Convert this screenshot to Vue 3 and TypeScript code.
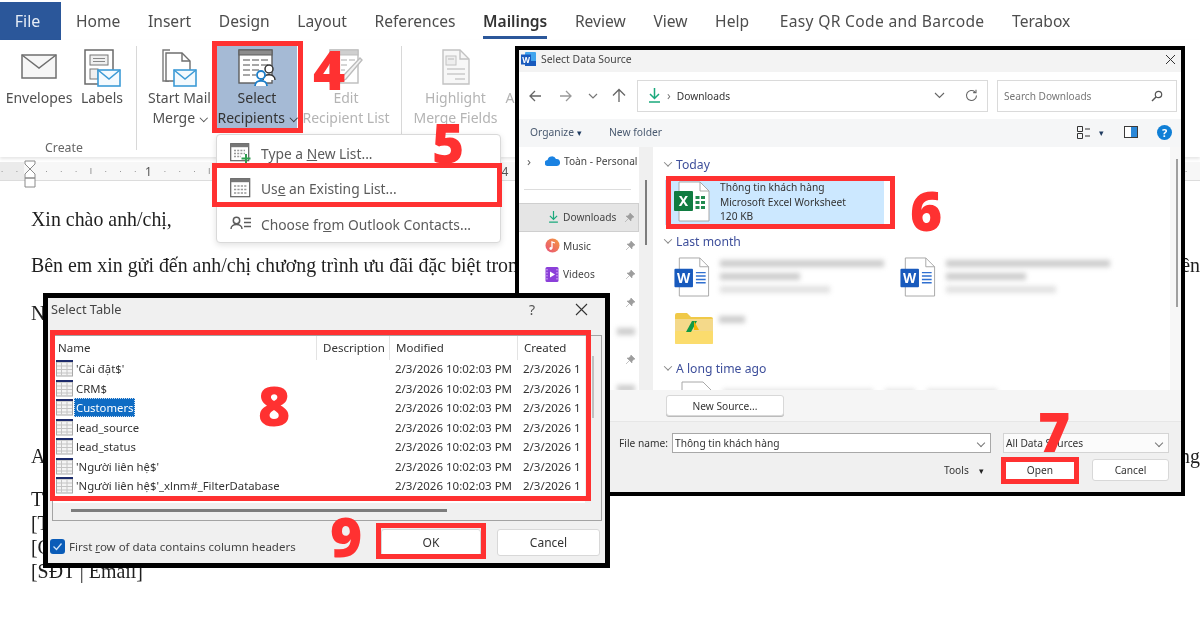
<script setup lang="ts">
const tabs: string[] = ['Home', 'Insert', 'Design', 'Layout', 'References', 'Mailings', 'Review', 'View', 'Help', 'Easy QR Code and Barcode', 'Terabox']
const tableRows: string[] = ["'Cài đặt$'", 'CRM$', 'Customers', 'lead_source', 'lead_status', "'Người liên hệ$'", "'Người liên hệ$'_xlnm#_FilterDatabase"]
const rulerDots: number[] = Array.from({ length: 84 }, (_, i) => i)
function dotX(i: number): number { return 1.6 + i * 14.8 }
const rulerNums: { n: number; x: number }[] = [{ n: 1, x: 148.4 }, { n: 2, x: 266.8 }, { n: 3, x: 385.2 }, { n: 4, x: 505 }]
</script>

<template>
  <div class="page">
    <!-- Word chrome -->
    <nav class="tabs">
      <div class="file">File</div>
      <span v-for="t in tabs" :key="t" class="tab" :class="{ on: t === 'Mailings', wide: t.startsWith('Easy') }">{{ t }}</span>
    </nav>

    <section class="ribbon">
      <div class="group g1">
        <div class="btns">
          <div class="rb w78">
            <div class="ic">
              <svg width="36" height="25" viewBox="0 0 36 25"><rect x="1" y="1" width="34" height="23" fill="#f6f6f6" stroke="#6f6f6f" stroke-width="1.5"/><path d="M1 1l17 13L35 1" fill="none" stroke="#6f6f6f" stroke-width="1.5"/></svg>
            </div>
            <span>Envelopes</span>
          </div>
          <div class="rb w48">
            <div class="ic">
              <svg width="37" height="38" viewBox="0 0 37 38"><rect x="1" y="1" width="28" height="34" fill="#fff" stroke="#6a6a6a" stroke-width="1.5"/><rect x="6" y="6" width="18" height="10" fill="#efefef" stroke="#777"/><path d="M9 9.5h12M9 12.500h12" stroke="#888"/><rect x="6" y="20" width="8" height="10" fill="#efefef" stroke="#777"/><rect x="14" y="21" width="22" height="16" fill="#f4fafe" stroke="#3d9bd6" stroke-width="1.600"/><path d="M14 21l11 9 11-9" fill="none" stroke="#3d9bd6" stroke-width="1.600"/></svg>
            </div>
            <span>Labels</span>
          </div>
        </div>
        <div class="glabel">Create</div>
      </div>

      <div class="group g2">
        <div class="btns">
          <div class="rb w76">
            <div class="ic">
              <svg width="36" height="38" viewBox="0 0 36 38"><path d="M8 1H1v31h6" fill="none" stroke="#7a7a7a" stroke-width="1.400"/><path d="M4 4h16l8 8v20H4z" fill="#fff" stroke="#6f6f6f" stroke-width="1.400"/><path d="M20 4v8h8" fill="none" stroke="#6f6f6f" stroke-width="1.400"/><rect x="12" y="21" width="22" height="16" fill="#f4fafe" stroke="#3d9bd6" stroke-width="1.600"/><path d="M12 21l11 9 11-9" fill="none" stroke="#3d9bd6" stroke-width="1.600"/></svg>
            </div>
            <span>Start Mail</span>
            <span>Merge<i class="chev"></i></span>
          </div>
          <div class="rb w80 active">
            <div class="ic">
              <svg width="38" height="38" viewBox="0 0 38 38"><rect x="1" y="1" width="33" height="33" fill="#fff" stroke="#5d5d5d" stroke-width="1.400"/><rect x="1" y="1" width="33" height="5" fill="#8d8d8d" stroke="#5d5d5d"/><path d="M5 11h7M14 11h7M23 11h7M5 16h7M14 16h7M23 16h7M5 21h7M14 21h7M5 26h7M14 26h4" stroke="#8a8a8a" stroke-width="1.400"/><circle cx="31" cy="20" r="4" fill="#fff" stroke="#333" stroke-width="1.500"/><path d="M25 31c0-7 12-7 12 0" fill="#fff" stroke="#333" stroke-width="1.500"/><circle cx="23" cy="26" r="4" fill="#fff" stroke="#1e7fc9" stroke-width="1.800"/><path d="M17 37c0-7 12-7 12 0" fill="#fff" stroke="#1e7fc9" stroke-width="1.800"/></svg>
            </div>
            <span>Select</span>
            <span>Recipients<i class="chev"></i></span>
          </div>
          <div class="rb w98 off">
            <div class="ic">
              <svg width="34" height="36" viewBox="0 0 34 36"><rect x="1" y="1" width="28" height="33" fill="#fff" stroke="#bdbdbd" stroke-width="1.400"/><rect x="1" y="1" width="28" height="5" fill="#cfcfcf" stroke="#bdbdbd"/><path d="M4 11h6M12 11h6M20 11h6M4 16h6M12 16h6M4 21h6M12 21h4" stroke="#c8c8c8" stroke-width="1.400"/><path d="M31 9l2 2-16 19-5 3 2-6z" fill="#f2f2f2" stroke="#bcbcbc" stroke-width="1.400"/></svg>
            </div>
            <span>Edit</span>
            <span>Recipient List</span>
          </div>
        </div>
      </div>

      <div class="group g3">
        <div class="btns">
          <div class="rb w93 off">
            <div class="ic">
              <svg width="28" height="36" viewBox="0 0 28 36"><path d="M1 1h17l9 9v25H1z" fill="#f7f7f7" stroke="#c2c2c2" stroke-width="1.400"/><path d="M18 1v9h9" fill="none" stroke="#c2c2c2" stroke-width="1.400"/><rect x="4" y="7" width="10" height="9" fill="#eee" stroke="#c2c2c2"/><path d="M6 10h6M5 20h18M5 25h18M13 30h10" stroke="#cacaca" stroke-width="1.400"/></svg>
            </div>
            <span>Highlight</span>
            <span>Merge Fields</span>
          </div>
          <div class="rb w60 off">
            <div class="ic"></div>
            <span>Address</span>
            <span>Block</span>
          </div>
        </div>
      </div>
    </section>

    <div class="ruler">
      <svg width="1200" height="20" viewBox="0 0 1200 20">
        <template v-for="i in rulerDots" :key="i">
          <rect v-if="i % 8 !== 2 && i !== 82" :x="dotX(i)" :y="i % 4 === 2 ? 6 : 9" width="1" :height="i % 4 === 2 ? 6 : 1" fill="#9a9a9a" />
        </template>
        <text v-for="r in rulerNums" :key="r.n" :x="r.x" y="14" class="rnum" text-anchor="middle">{{ r.n }}</text>
      </svg>
      <svg class="marker" width="12" height="28" viewBox="0 0 12 28"><path d="M1 1h10v3l-5 5-5-5zM6 9l5 5v4H1v-4zM1 18h10v9H1z" fill="#fff" stroke="#8a8a8a"/></svg>
    </div>

    <article class="doc">
      <p>Xin chào anh/chị,</p>
      <p class="between m22"><span>Bên em xin gửi đến anh/chị chương trình ưu đãi đặc biệt trong</span><span>ên</span></p>
      <p class="m24">N</p>
      <p class="between m119"><span>A</span><span>ng</span></p>
      <p class="m19">T</p>
      <p>[T</p>
      <p>[C</p>
      <p>[SĐT | Email]</p>
    </article>

    <!-- Dropdown menu -->
    <div class="menu">
      <div class="mi">
        <svg width="22" height="21" viewBox="0 0 22 21"><rect x=".7" y=".7" width="18" height="17" fill="#fff" stroke="#5f5f5f" stroke-width="1.200"/><rect x=".7" y=".7" width="18" height="3.500" fill="#777"/><path d="M4 7.500h11M4 10.500h11M4 13.500h7" stroke="#999" stroke-width="1.300" stroke-dasharray="2 1.200"/><path d="M16 11v9M11.500 15.500h9" stroke="#2f9e4f" stroke-width="2"/></svg>
        <span>Type a <u>N</u>ew List...</span>
      </div>
      <div class="mi">
        <svg width="22" height="21" viewBox="0 0 22 21"><rect x=".7" y=".7" width="19" height="18" fill="#fff" stroke="#5f5f5f" stroke-width="1.200"/><rect x=".7" y=".7" width="19" height="3.500" fill="#777"/><path d="M4 8h13M4 11.500h13M4 15h13" stroke="#999" stroke-width="1.400" stroke-dasharray="2.200 1.200"/></svg>
        <span>Us<u>e</u> an Existing List...</span>
      </div>
      <div class="mi">
        <svg width="22" height="21" viewBox="0 0 22 21"><circle cx="6.500" cy="6.500" r="3.200" fill="none" stroke="#5c5c5c" stroke-width="1.500"/><path d="M1 15c0-6 11-6 11 0" fill="none" stroke="#5c5c5c" stroke-width="1.500"/><path d="M14 4.500h7M14 8.500h7M14 12.500h7" stroke="#5c5c5c" stroke-width="1.300"/></svg>
        <span>Choose fr<u>o</u>m Outlook Contacts...</span>
      </div>
    </div>

    <!-- Select Data Source -->
    <section class="win ds">
      <header class="ds-title">
        <svg width="15" height="14" viewBox="0 0 15 14"><rect x="4" y="0" width="11" height="14" rx="1" fill="#41a5ee"/><rect x="4" y="9" width="11" height="5" fill="#185abd"/><rect x="0" y="2.500" width="10" height="10" fill="#185abd"/><text x="5" y="10.500" class="w-mini" text-anchor="middle">W</text></svg>
        <span class="grow">Select Data Source</span>
        <svg width="11" height="11" viewBox="0 0 11 11"><path d="M1 1l9 9M10 1l-9 9" stroke="#333" stroke-width="1"/></svg>
      </header>

      <div class="ds-addr">
        <svg width="100" height="18" viewBox="0 0 100 18" class="navs">
          <path d="M1 9h11M6 4L1 9l5 5" fill="none" stroke="#666" stroke-width="1.300"/>
          <path d="M31 9h11M37 4l5 5-5 5" fill="none" stroke="#999" stroke-width="1.300"/>
          <path d="M60 7l4 4 4-4" fill="none" stroke="#777" stroke-width="1.200"/>
          <path d="M90 15V3M84 8.500l6-6 6 6" fill="none" stroke="#666" stroke-width="1.300"/>
        </svg>
        <div class="addr-box">
          <svg width="13" height="15" viewBox="0 0 13 15"><path d="M6.500 0v10M2 6l4.500 4.500L11 6M1 14h11" fill="none" stroke="#1aa97c" stroke-width="1.500"/></svg>
          <i class="crumb">›</i>
          <span class="grow">Downloads</span>
          <svg width="11" height="7" viewBox="0 0 11 7"><path d="M1 1l4.500 4.500L10 1" fill="none" stroke="#666" stroke-width="1.100"/></svg>
          <svg class="refresh" width="13" height="13" viewBox="0 0 13 13"><path d="M11.500 6.500a5 5 0 1 1-1.600-3.700M11 .8v2.800H8.200" fill="none" stroke="#666" stroke-width="1.100"/></svg>
        </div>
        <div class="search">
          <span class="grow">Search Downloads</span>
          <svg width="12" height="12" viewBox="0 0 12 12"><circle cx="7.500" cy="4.500" r="3.200" fill="none" stroke="#555" stroke-width="1.200"/><path d="M5 7L1 11" stroke="#555" stroke-width="1.500"/></svg>
        </div>
      </div>

      <div class="ds-tools">
        <span class="org">Organize <i class="tri">▾</i></span>
        <span class="nf grow">New folder</span>
        <svg width="13" height="13" viewBox="0 0 13 13"><path d="M.5.500h5v5h-5zM.5 7.500h5v5h-5zM8 3h5M8 10h5" fill="none" stroke="#333" stroke-width="1"/></svg>
        <i class="tri t2">▾</i>
        <svg class="pane-ic" width="14" height="12" viewBox="0 0 14 12"><rect x=".5" y=".5" width="13" height="11" fill="#fff" stroke="#3b3b3b"/><rect x="7" y="1" width="6" height="10" fill="#2b88d8"/></svg>
        <div class="help">?</div>
      </div>

      <div class="ds-body">
        <aside class="nav">
          <div class="nr first">
            <i class="arrow">›</i>
            <svg width="15" height="10" viewBox="0 0 15 10"><path d="M3 10a3 3 0 0 1-.5-6A4.500 4.500 0 0 1 11 3a3.300 3.300 0 0 1 1 7z" fill="#1a82e2"/></svg>
            <span>Toàn - Personal</span>
          </div>
          <hr />
          <div class="nr sel">
            <svg width="11" height="12" viewBox="0 0 13 15"><path d="M6.500 0v10M2 6l4.500 4.500L11 6M1 14h11" fill="none" stroke="#1aa97c" stroke-width="1.500"/></svg>
            <span class="grow">Downloads</span>
            <svg class="pin" width="9" height="9" viewBox="0 0 9 9"><path d="M5 0l4 4-1.500.5L6 6.500 6 8 1 3l1.500 0L4.500 1.500z M3 6L0 9" fill="#9d9d9d" stroke="#9d9d9d" stroke-width=".6"/></svg>
          </div>
          <div class="nr">
            <svg width="15" height="15" viewBox="0 0 15 15"><defs><linearGradient id="mg" x1="0" y1="1" x2="1" y2="0"><stop offset="0" stop-color="#e8517a"/><stop offset="1" stop-color="#f59a3c"/></linearGradient></defs><circle cx="7.500" cy="7.500" r="7" fill="url(#mg)"/><path d="M7 10.500V4l3 1" fill="none" stroke="#fff" stroke-width="1.300"/><circle cx="5.800" cy="10.500" r="1.400" fill="#fff"/></svg>
            <span class="grow">Music</span>
            <svg class="pin" width="9" height="9" viewBox="0 0 9 9"><path d="M5 0l4 4-1.500.5L6 6.500 6 8 1 3l1.500 0L4.500 1.500z M3 6L0 9" fill="#9d9d9d" stroke="#9d9d9d" stroke-width=".6"/></svg>
          </div>
          <div class="nr">
            <svg width="14" height="15" viewBox="0 0 13 15"><rect width="13" height="15" rx="1.500" fill="#8b3fd9"/><path d="M4.500 4.500l5 3-5 3z" fill="#fff"/><path d="M1.500 2v11M11.500 2v11" stroke="#d8bdf5" stroke-dasharray="1.500 1.500"/></svg>
            <span class="grow vid">Videos</span>
            <svg class="pin" width="9" height="9" viewBox="0 0 9 9"><path d="M5 0l4 4-1.500.5L6 6.500 6 8 1 3l1.500 0L4.500 1.500z M3 6L0 9" fill="#9d9d9d" stroke="#9d9d9d" stroke-width=".6"/></svg>
          </div>
          <div class="nr"><span class="grow"></span><svg class="pin" width="9" height="9" viewBox="0 0 9 9"><path d="M5 0l4 4-1.500.5L6 6.500 6 8 1 3l1.500 0L4.500 1.500z M3 6L0 9" fill="#9d9d9d" stroke="#9d9d9d" stroke-width=".6"/></svg></div>
          <div class="nr"><span class="grow"></span><b class="blur bw18"></b></div>
          <div class="nr"><span class="grow"></span><svg class="pin" width="9" height="9" viewBox="0 0 9 9"><path d="M5 0l4 4-1.500.5L6 6.500 6 8 1 3l1.500 0L4.500 1.500z M3 6L0 9" fill="#9d9d9d" stroke="#9d9d9d" stroke-width=".6"/></svg></div>
          <div class="nr"><span class="grow"></span><b class="blur bw18"></b></div>
        </aside>
        <div class="split"><b class="thumb"></b></div>
        <main class="files">
          <div class="gh first"><i class="gchev"></i>Today</div>
          <div class="tile">
            <svg width="36" height="41" viewBox="0 0 36 41"><path d="M5 1h21l9 9v30H5z" fill="#fff" stroke="#a8a8a8"/><path d="M26 1v9h9" fill="none" stroke="#a8a8a8"/><rect x="0" y="10" width="19" height="20" rx="1" fill="#107c41"/><text x="9.500" y="25" class="w-big" text-anchor="middle">X</text><path d="M21.500 15h4v3h-4zM27 15h4v3h-4zM21.500 20h4v3h-4zM27 20h4v3h-4zM21.500 25h4v3h-4zM27 25h4v3h-4z" fill="#218a4f"/></svg>
            <div class="tile-t">
              <span>Thông tin khách hàng</span>
              <span>Microsoft Excel Worksheet</span>
              <span>120 KB</span>
            </div>
          </div>
          <div class="gh"><i class="gchev"></i>Last month</div>
          <div class="doc-row">
            <div v-for="n in 2" :key="n" class="fitem">
              <svg width="36" height="40" viewBox="0 0 36 41"><path d="M5 1h21l9 9v30H5z" fill="#fff" stroke="#a8a8a8"/><path d="M26 1v9h9" fill="none" stroke="#a8a8a8"/><rect x="0" y="12" width="19" height="19" rx="1" fill="#185abd"/><text x="9.500" y="26.500" class="w-big" text-anchor="middle">W</text><path d="M22 16h10M22 19.500h10M22 23h10M22 26.500h10" stroke="#2f6fd0" stroke-width="1.500"/></svg>
              <div class="bl">
                <b class="blur bw160"></b>
                <b class="blur bw80"></b>
                <b class="blur bw120 pale"></b>
              </div>
            </div>
          </div>
          <div class="fitem folder">
            <svg width="38" height="31" viewBox="0 0 38 31"><path d="M0 2a2 2 0 0 1 2-2h10l4 4h20a2 2 0 0 1 2 2v23a2 2 0 0 1-2 2H2a2 2 0 0 1-2-2z" fill="#f0c948"/><rect x="0" y="6" width="38" height="13" fill="#f4d98a"/><rect x="0" y="18" width="38" height="13" rx="1" fill="#fbdc6d"/><path d="M17 8l-6 11h5l6-11z" fill="#119a45"/><path d="M19 8l5 9h-5z" fill="#f4b400"/></svg>
            <div class="bl"><b class="blur bw26"></b></div>
          </div>
          <div class="gh long"><i class="gchev"></i>A long time ago</div>
          <div class="fitem last">
            <svg width="36" height="41" viewBox="0 0 36 41"><path d="M5 1h21l9 9v30H5z" fill="#fff" stroke="#a8a8a8"/></svg>
            <div class="bl row"><b class="blur bw150 pale"></b><b class="blur bw30 pale"></b><b class="blur bw70 pale"></b></div>
          </div>
        </main>
        <div class="vtrack"><b></b></div>
      </div>

      <div class="ds-src"><button class="btn new">New Source...</button></div>
      <footer class="ds-foot">
        <div class="frow">
          <label>File name:</label>
          <div class="combo fname"><span class="grow">Thông tin khách hàng</span><i class="dd"></i></div>
          <div class="combo ftype"><span class="grow">All Data Sources</span><i class="dd"></i></div>
        </div>
        <div class="frow r2">
          <span class="tools">Tools <i class="tri dark">▾</i></span>
          <button class="btn open">Open</button>
          <button class="btn cancel">Cancel</button>
        </div>
      </footer>
    </section>

    <!-- Select Table -->
    <section class="win st">
      <header class="st-title">
        <span class="grow">Select Table</span>
        <span class="q">?</span>
        <svg width="13" height="13" viewBox="0 0 13 13"><path d="M1 1l11 11M12 1L1 12" stroke="#333" stroke-width="1.100"/></svg>
      </header>
      <div class="panel">
        <div class="listwrap">
          <div class="list">
            <div class="thead">
              <span class="c1">Name</span><span class="c2">Description</span><span class="c3">Modified</span><span class="c4">Created</span>
            </div>
            <div v-for="r in tableRows" :key="r" class="trow">
              <div class="c1 namecell">
                <svg width="17" height="17" viewBox="0 0 17 17"><rect x=".5" y="2" width="16" height="14" fill="#f4f4f4" stroke="#a8a8a8"/><rect y="0" width="17" height="2" fill="#1d2b6b"/><path d="M5.500 2.500v13M11 2.500v13M1 6h15M1 9.500h15M1 13h15" stroke="#c4c4c4"/></svg>
                <span :class="{ selected: r === 'Customers' }">{{ r }}</span>
              </div>
              <span class="c2"></span>
              <span class="c3">2/3/2026 10:02:03 PM</span>
              <span class="c4">2/3/2026 1</span>
            </div>
          </div>
          <div class="vbar"><b></b></div>
        </div>
        <div class="hbar"><b></b></div>
      </div>
      <div class="st-foot">
        <div class="cb">
          <svg width="15" height="15" viewBox="0 0 15 15"><rect width="15" height="15" rx="3" fill="#0a5cb8"/><path d="M3.500 7.500l3 3 5-6" fill="none" stroke="#cfe3f7" stroke-width="1.300"/></svg>
          <span>First <u>r</u>ow of data contains column headers</span>
        </div>
        <button class="btn ok">OK</button>
        <button class="btn st-cancel">Cancel</button>
      </div>
    </section>

    <!-- annotations -->
    <div class="box b4"></div>
    <div class="box b5"></div>
    <div class="box b6"></div>
    <div class="box b7"></div>
    <div class="box b8"></div>
    <div class="box b9"></div>
    <span class="num n4">4</span>
    <span class="num n5">5</span>
    <span class="num n6">6</span>
    <span class="num n7">7</span>
    <span class="num n8">8</span>
    <span class="num n9">9</span>
  </div>
</template>

<style scoped>
.page {
  position: relative;
  width: 1200px;
  height: 630px;
  overflow: hidden;
  background: #fff;
  font-family: "Noto Sans", "Open Sans", sans-serif;
  color: #444;
  filter: blur(0.35px);
}
.grow { flex: 1; }
svg { display: block; flex: none; }

/* tabs */
.tabs { display: flex; align-items: center; height: 40px; padding-top: 2px; box-sizing: border-box; gap: 27.600px; white-space: nowrap; }
.file { width: 61px; height: 38px; background: #2b579a; color: #e6edf6; font-size: 16px; display: flex; align-items: center; justify-content: center; margin-right: -12.600px; padding-right: 6px; box-sizing: border-box; }
.tab { font-size: 15.600px; color: #4d4d4d; position: relative; }
.tab.on { color: #333; font-weight: 600; }
.tab.on::after { content: ""; position: absolute; left: 0; right: 0; bottom: -7px; height: 3px; background: #2b579a; }
.tab.wide { letter-spacing: .33px; margin-left: 3px; }

/* ribbon */
.ribbon { display: flex; height: 117px; box-sizing: border-box; padding-top: 6px; box-shadow: 0 2px 3px rgba(0,0,0,.1); position: relative; }
.group { position: relative; height: 104px; }
.group.g1 { width: 136px; border-right: 1px solid #d8d8d8; flex: none; }
.group.g2 { width: 265px; padding-left: 5px; box-sizing: border-box; border-right: 1px solid #d8d8d8; flex: none; }
.group.g3 { padding-left: 7px; flex: none; }
.btns { display: flex; }
.rb { display: flex; flex-direction: column; align-items: center; height: 82px; font-size: 14px; line-height: 20px; color: #505050; white-space: nowrap; box-sizing: border-box; padding-top: 3px; flex: none; }
.w78 { width: 78px; } .w48 { width: 48px; } .w76 { width: 75px; } .w80 { width: 80px; } .w98 { width: 98px; } .w93 { width: 93px; } .w60 { width: 60px; }
.ic { height: 39px; display: flex; align-items: flex-start; justify-content: center; }
.w78 .ic { padding-top: 5px; box-sizing: border-box; }
.rb.active { background: #a5bad5; color: #333; }
.rb.off { color: #b4b4b4; }
.chev { display: inline-block; width: 4.500px; height: 4.500px; border-right: 1.200px solid currentColor; border-bottom: 1.200px solid currentColor; transform: rotate(45deg); margin-left: 6px; position: relative; top: -3px; }
.glabel { position: absolute; left: 0; width: 128px; top: 94px; text-align: center; font-size: 12.300px; line-height: 16px; color: #666; }

/* ruler */
.ruler { position: relative; margin-top: 5px; height: 18px; background: linear-gradient(to right, #ebebeb 24px, #f7f7f7 24px); border-bottom: 1px solid #dcdcdc; }
.ruler > svg:first-child { overflow: hidden; }
.rnum { font-size: 12px; fill: #555; font-family: "Noto Sans", sans-serif; }
.marker { position: absolute; left: 24px; top: -2px; }

/* doc */
.doc { font-family: "Liberation Serif", serif; font-size: 19.900px; line-height: 24px; color: #1f1f1f; padding: 26px 0 0 31px; }
.doc p { margin: 0; white-space: nowrap; }
.between { display: flex; justify-content: space-between; }
.m22 { margin-top: 22px !important; }
.m24 { margin-top: 24px !important; }
.m119 { margin-top: 119px !important; }
.m19 { margin-top: 19px !important; }

/* menu */
.menu { position: absolute; left: 216px; top: 134px; width: 285px; height: 109px; background: #fff; border: 1px solid #d9d9d9; border-radius: 4px; box-shadow: 0 2px 6px rgba(0,0,0,.12); box-sizing: border-box; display: flex; flex-direction: column; padding-top: 1px; }
.mi { display: flex; align-items: center; gap: 9px; height: 35.500px; padding-left: 13px; font-size: 13.800px; color: #5b5b5b; white-space: nowrap; }

/* windows */
.win { position: absolute; box-sizing: border-box; border: 4px solid #000; display: flex; flex-direction: column; }
.ds { left: 515px; top: 46px; width: 670px; height: 450px; background: #fff; font-size: 10.200px; color: #333; }
.ds-title { display: flex; align-items: center; height: 22px; background: #f3f3f3; padding: 0 5px 4px 2px; gap: 5px; font-size: 10.400px; color: #444; flex: none; box-sizing: border-box; }
.ds-addr { display: flex; align-items: center; height: 47px; background: #fff; flex: none; box-sizing: border-box; padding: 0 4px 0 10px; }
.navs { width: 100px; margin-right: 8px; }
.addr-box { width: 351px; height: 32px; border: 1px solid #dadada; box-sizing: border-box; display: flex; align-items: center; padding: 0 9px 0 10px; gap: 6px; font-size: 10.200px; color: #333; }
.crumb { font-style: normal; color: #777; font-size: 12px; }
.refresh { margin-left: 14px; }
.search { margin-left: 9px; width: 180px; height: 32px; border: 1px solid #dadada; box-sizing: border-box; display: flex; align-items: center; padding: 0 13px 0 6px; color: #777; font-size: 10.100px; }
.ds-tools { display: flex; align-items: center; height: 28px; background: #f5f6f7; flex: none; padding: 0 9px 2px 11px; box-sizing: border-box; font-size: 10.300px; color: #4a5a70; }
.org { width: 79px; }
.nf { color: #4a5a70; }
.tri { font-style: normal; font-size: 9px; color: #1e3a5f; }
.t2 { margin: 0 20px 0 9px; }
.pane-ic { margin-right: 19px; }
.help { width: 15px; height: 15px; border-radius: 50%; background: #0f7fd6; color: #fff; font-size: 11px; font-weight: 700; text-align: center; line-height: 15px; }
.ds-body { display: flex; height: 243px; flex: none; overflow: hidden; background: #fff; }
.nav { width: 120px; flex: none; background: #fff; overflow: hidden; }
.nr { display: flex; align-items: center; height: 28.500px; padding-left: 26px; gap: 3px; color: #444; font-size: 10.200px; position: relative; padding-right: 4px; box-sizing: border-box; white-space: nowrap; }
.nr.first { height: 28px; padding: 0 0 0 8px; gap: 4px; }
.vid { margin-left: 1px; }
.arrow { font-style: normal; color: #666; font-size: 13px; width: 14px; flex: none; }
.nav hr { margin: 14px 8px 13px 5px; border: 0; border-top: 1px solid #ddd; }
.nr.sel { background: #e5e5e5; border: 1px solid #cfcfcf; border-left: 0; padding-left: 29px; gap: 4px; }
.bw18 { width: 18px; height: 7px; }
.split { width: 14px; flex: none; background: #f0f0f0; position: relative; }
.thumb { position: absolute; left: 6px; top: 33px; width: 2px; height: 65px; background: #7d7d7d; }
.files { width: 517px; flex: none; overflow: hidden; padding-left: 12px; box-sizing: border-box; }
.gh { display: flex; align-items: center; font-size: 12.200px; color: #3e4f9b; height: 18px; gap: 4px; margin-top: 7px; }
.gh.first { margin-top: 8px; }
.gh.long { margin-top: 15px; }
.gchev { width: 5px; height: 5px; border-right: 1px solid #888; border-bottom: 1px solid #888; transform: rotate(45deg) translate(-1px,-1px); margin-right: 1px; }
.tile { display: flex; gap: 10px; width: 219px; height: 45px; background: #cce8ff; margin-top: 7px; padding: 1px 0 0 9px; box-sizing: border-box; }
.tile-t { display: flex; flex-direction: column; font-size: 10.200px; line-height: 14.700px; color: #333; white-space: nowrap; margin-top: -1px; }
.doc-row { display: flex; gap: 15px; margin-top: 7px; padding-left: 9px; }
.fitem { display: flex; gap: 10px; width: 211px; height: 41px; }
.bl { display: flex; flex-direction: column; gap: 6px; padding-top: 3px; }
.bl.row { flex-direction: row; gap: 12px; padding-top: 8px; }
.blur { display: block; height: 7px; background: #999; filter: blur(2.5px); opacity: .5; }
.blur.pale { background: #c4c4c4; }
.bw160 { width: 164px; } .bw80 { width: 80px; } .bw120 { width: 110px; } .bw26 { width: 26px; } .bw150 { width: 150px; } .bw30 { width: 30px; } .bw70 { width: 70px; }
.folder { margin: 15px 0 0 10px; height: 31px; gap: 6px; }
.last { margin: 4px 0 0 12px; }
.vtrack { flex: 1; background: #f7f7f7; position: relative; }
.vtrack b { position: absolute; left: 6px; top: 12px; width: 2px; height: 148px; background: #a0a0a0; }
.ds-src { height: 31px; background: #f5f5f5; border-bottom: 1px solid #e6e6e6; padding-left: 147px; display: flex; align-items: center; flex: none; }
.btn { font-family: inherit; border: 1px solid #d8d8d8; background: #fff; border-radius: 3px; color: #333; padding: 0; display: block; box-sizing: border-box; flex: none; font-size: 10.200px; }
.new { width: 118px; height: 21px; box-shadow: 0 1px 0 #bbb; }
.ds-foot { flex: 1; background: #f0f0f0; padding: 11px 0 0 100px; box-sizing: border-box; }
.frow { display: flex; align-items: center; height: 20px; font-size: 10.200px; color: #333; }
.frow label { width: 52px; margin-right: 1px; }
.combo { height: 20px; border: 1px solid #bbb; background: #fff; box-sizing: border-box; display: flex; align-items: center; padding: 0 6px 0 2px; }
.fname { width: 319px; border-color: #a8a8a8; }
.ftype { width: 166px; margin-left: 12px; background: #fbfbfb; border-color: #d4d4d4; }
.dd { width: 5px; height: 5px; border-right: 1px solid #777; border-bottom: 1px solid #777; transform: rotate(45deg); }
.r2 { margin-top: 5px; height: 24px; justify-content: flex-start; }
.tools { width: 59px; margin-left: 325px; flex: none; }
.tri.dark { color: #222; margin-left: 8px; }
.open { width: 74px; height: 24px; }
.cancel { width: 77px; height: 22px; margin-left: 15px; }

.st { left: 43px; top: 293px; width: 567px; height: 275px; background: #f0f0f0; border-width: 5px; font-size: 11.500px; color: #333; }
.st-title { display: flex; align-items: center; height: 22px; padding: 0 17px 0 3px; font-size: 12.800px; color: #444; flex: none; }
.q { margin-right: 40px; font-size: 14px; color: #555; }
.panel { margin: 15px 3px 0 4px; border: 1px solid #a3a3a3; height: 186px; box-sizing: border-box; display: flex; flex-direction: column; background: #f0f0f0; flex: none; }
.listwrap { display: flex; height: 167px; flex: none; }
.list { width: 532px; background: #fff; overflow: hidden; flex: none; padding-left: 2px; box-sizing: border-box; }
.thead, .trow { display: grid; grid-template-columns: 261px 73px 128px 68px; white-space: nowrap; }
.thead { height: 23px; align-items: start; }
.thead span { padding-left: 6px; border-left: 1px solid #e3e3e3; height: 24px; line-height: 24px; box-sizing: border-box; }
.thead .c1 { border-left: 0; padding-left: 3px; }
.trow { height: 19.500px; align-items: center; }
.trow > .c3 { padding-left: 6px; }
.trow > .c4 { padding-left: 6px; }
.namecell { display: flex; align-items: center; gap: 1px; padding-left: 1px; font-size: 11.300px; }
.namecell span { padding: 0 2px; line-height: 19px; }
.selected { background: #0f6cc4; color: #fff; outline: 1px dotted #cfdff0; outline-offset: -1px; }
.vbar { flex: 1; background: #f0f0f0; position: relative; }
.vbar b { position: absolute; left: 7px; top: 20px; width: 2px; height: 62px; background: #c0c0c0; }
.hbar { flex: 1; position: relative; }
.hbar b { position: absolute; left: 18px; top: 6px; width: 376px; height: 3px; background: #7d7d7d; }
.st-foot { display: flex; align-items: center; flex: 1; padding: 1px 5px 0 2px; }
.cb { display: flex; align-items: center; gap: 4px; flex: 1; font-size: 11.500px; color: #444; padding-top: 8px; }
.ok { width: 100px; height: 27px; font-size: 12px; }
.st-cancel { width: 103px; height: 27px; margin-left: 16px; font-size: 12px; }

/* annotations */
.box { position: absolute; border: 5px solid #ff3131; box-sizing: border-box; }
.b4 { left: 212px; top: 41px; width: 91px; height: 92px; }
.b5 { left: 212px; top: 163px; width: 290px; height: 44px; }
.b6 { left: 666px; top: 176px; width: 229px; height: 53px; }
.b7 { left: 1001px; top: 457px; width: 78px; height: 27px; }
.b8 { left: 50px; top: 330px; width: 541px; height: 171px; }
.b9 { left: 376px; top: 523px; width: 110px; height: 36px; }
.num { position: absolute; font-family: "Open Sans", sans-serif; font-weight: 800; font-size: 55px; line-height: 57px; color: #ff3131; }
.n4 { left: 313px; top: 40px; }
.n5 { left: 432px; top: 113px; }
.n6 { left: 910px; top: 181px; }
.n7 { left: 1038px; top: 402px; }
.n8 { left: 258px; top: 376px; }
.n9 { left: 330px; top: 507px; }
.w-mini { font-size: 8px; font-weight: 700; fill: #fff; font-family: "Noto Sans", sans-serif; }
.w-big { font-size: 14px; font-weight: 700; fill: #fff; font-family: "Noto Sans", sans-serif; }
</style>
